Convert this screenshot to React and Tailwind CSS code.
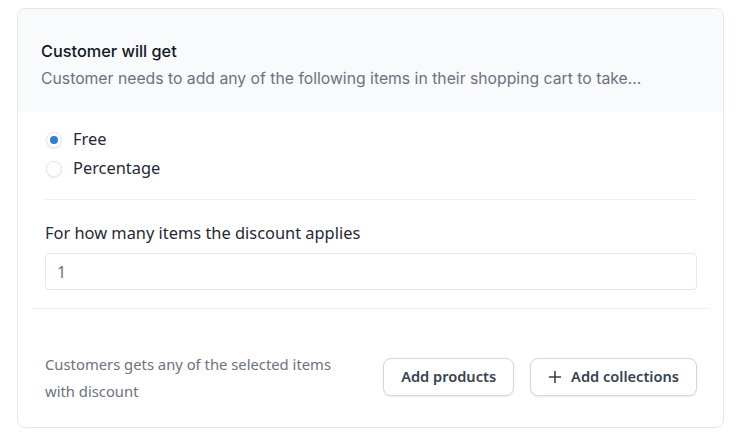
import React, { useState } from "react";

const RadioOption = ({ label, checked, onChange }) => (
  <label className="flex items-center gap-[11px] pl-[1px] cursor-pointer h-[29px]">
    <span
      className="flex items-center justify-center w-[16px] h-[16px] rounded-full bg-white border border-[#e5e7eb] shadow-[0_1px_2px_rgba(0,0,0,0.08)]"
      onClick={onChange}
    >
      {checked ? <span className="w-[8px] h-[8px] rounded-full bg-[#2f7fd0]" /> : null}
    </span>
    <span className="text-[16.4px] text-[#1f2937]" onClick={onChange}>{label}</span>
  </label>
);

const App = () => {
  const [type, setType] = useState("free");
  const [count, setCount] = useState("1");

  return (
    <div className="min-h-[436px] bg-white pt-[8px] pl-[17px] pr-[13px] font-['Noto_Sans',sans-serif]">
      <div className="border border-[#e5e7eb] rounded-[8px] overflow-hidden">
        <div className="bg-[#f9fafb] px-[23px] pt-[31px] pb-[23px] font-['Inter',sans-serif]">
          <h2 className="text-[16.3px] font-medium text-[#111827] leading-[22px]">Customer will get</h2>
          <p className="mt-[7px] text-[15.75px] text-[#6b7280] leading-[20px] truncate">
            Customer needs to add any of the following items in their shopping cart to take...
          </p>
        </div>

        <div className="px-[14px]">
          <div className="mx-[13px] pt-[13px] pb-[16px] border-b border-[#f0f1f3]">
            <RadioOption label="Free" checked={type === "free"} onChange={() => setType("free")} />
            <RadioOption label="Percentage" checked={type === "percentage"} onChange={() => setType("percentage")} />
          </div>

          <div className="pl-[13px] pr-[12px] pt-[21px] pb-[18px] border-b border-[#f0f1f3]">
            <div className="text-[16.4px] text-[#1f2937] leading-[24px]">For how many items the discount applies</div>
            <input
              value={count}
              onChange={(e) => setCount(e.target.value)}
              className="mt-[8px] w-full h-[37px] px-[11px] border border-[#e5e7eb] rounded-[4px] text-[16px] text-[#6b7280] outline-none"
            />
          </div>

          <div className="flex items-center justify-between pl-[13px] pr-[12px] pt-[40px] pb-[22px]">
            <p className="mt-[2px] text-[14.8px] text-[#6b7280] leading-[27px] w-[300px]">
              Customers gets any of the selected items with discount
            </p>
            <div className="flex items-center gap-[16px]">
              <button className="h-[38px] px-[17px] rounded-[8px] border border-[#d4d6e0] bg-white shadow-[0_1px_2px_rgba(0,0,0,0.08)] text-[14.6px] font-semibold text-[#374151]">
                Add products
              </button>
              <button className="flex items-center gap-[9px] h-[38px] px-[17px] rounded-[8px] border border-[#d4d6e0] bg-white shadow-[0_1px_2px_rgba(0,0,0,0.08)] text-[14.6px] font-semibold text-[#374151]">
                <svg width="14" height="14" viewBox="0 0 14 14" fill="none" stroke="currentColor" strokeWidth="1.6" strokeLinecap="round">
                  <path d="M7 1.5v11M1.5 7h11" />
                </svg>
                Add collections
              </button>
            </div>
          </div>
        </div>
      </div>
    </div>
  );
};

export default App;
